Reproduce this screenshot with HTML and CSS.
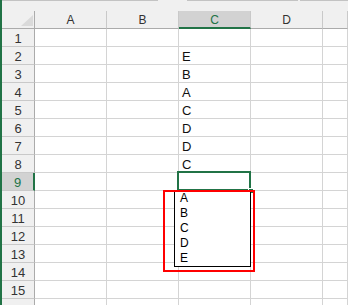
FILE: index.html
```html
<!DOCTYPE html>
<html>
<head>
<meta charset="utf-8">
<link rel="stylesheet" href="styles.css">
</head>
<body>
<div class="app">
  <div class="strip"></div>
  <div class="main">
    <div class="topbar">
      <span class="seg seg1"></span><span class="gap gap1"></span><span class="seg seg2"></span><span class="gap gap2"></span><span class="seg seg3"></span>
    </div>
    <div class="sheet">
      <div class="hd corner"><svg width="12" height="11" viewBox="0 0 12 11"><polygon points="12,0 12,11 0,11" fill="#dadada"/></svg></div>
      <div class="hd col">A</div>
      <div class="hd col">B</div>
      <div class="hd col sel-col">C</div>
      <div class="hd col">D</div>
      <div class="hd col last"></div>

      <div class="hd row">1</div><div class="c"></div><div class="c"></div><div class="c"></div><div class="c"></div><div class="c"></div>
      <div class="hd row">2</div><div class="c"></div><div class="c"></div><div class="c">E</div><div class="c"></div><div class="c"></div>
      <div class="hd row">3</div><div class="c"></div><div class="c"></div><div class="c">B</div><div class="c"></div><div class="c"></div>
      <div class="hd row">4</div><div class="c"></div><div class="c"></div><div class="c">A</div><div class="c"></div><div class="c"></div>
      <div class="hd row">5</div><div class="c"></div><div class="c"></div><div class="c">C</div><div class="c"></div><div class="c"></div>
      <div class="hd row">6</div><div class="c"></div><div class="c"></div><div class="c">D</div><div class="c"></div><div class="c"></div>
      <div class="hd row">7</div><div class="c"></div><div class="c"></div><div class="c">D</div><div class="c"></div><div class="c"></div>
      <div class="hd row">8</div><div class="c"></div><div class="c"></div><div class="c">C</div><div class="c"></div><div class="c"></div>
      <div class="hd row sel-row">9</div><div class="c"></div><div class="c"></div><div class="c"></div><div class="c"></div><div class="c"></div>
      <div class="hd row">10</div><div class="c"></div><div class="c"></div><div class="c"></div><div class="c"></div><div class="c"></div>
      <div class="hd row">11</div><div class="c"></div><div class="c"></div><div class="c"></div><div class="c"></div><div class="c"></div>
      <div class="hd row">12</div><div class="c"></div><div class="c"></div><div class="c"></div><div class="c"></div><div class="c"></div>
      <div class="hd row">13</div><div class="c"></div><div class="c"></div><div class="c"></div><div class="c"></div><div class="c"></div>
      <div class="hd row">14</div><div class="c"></div><div class="c"></div><div class="c"></div><div class="c"></div><div class="c"></div>
      <div class="hd row">15</div><div class="c"></div><div class="c"></div><div class="c"></div><div class="c"></div><div class="c"></div>
      <div class="hd row"></div><div class="c"></div><div class="c"></div><div class="c"></div><div class="c"></div><div class="c"></div>
    </div>
  </div>

  <div class="selection"><span class="handle"></span></div>
  <ul class="dropdown">
    <li>A</li>
    <li>B</li>
    <li>C</li>
    <li>D</li>
    <li>E</li>
  </ul>
  <div class="highlight"></div>
</div>
</body>
</html>
```

FILE: styles.css
```css
html, body {
  margin: 0;
  padding: 0;
  background: #ffffff;
}

.app {
  position: relative;
  width: 348px;
  height: 305px;
  overflow: hidden;
  display: flex;
  font-family: "Liberation Sans", Arial, sans-serif;
}

.strip {
  width: 2px;
  flex: none;
  background: #217346;
}

.main {
  flex: 1;
  display: flex;
  flex-direction: column;
  min-width: 0;
}

.topbar {
  height: 11px;
  flex: none;
  display: flex;
  align-items: flex-start;
  background: #f0f0f0;
}

.seg {
  height: 1px;
  background: #c3c3c3;
}

.seg1 { width: 156px; }
.gap1 { width: 29px; }
.seg2 { width: 111px; }
.gap2 { width: 2px; }
.seg3 { flex: 1; }

.sheet {
  display: grid;
  grid-template-columns: 33px 72px 72px 72px 72px 1fr;
  grid-auto-rows: 18px;
}

.sheet > div {
  box-sizing: border-box;
  border-right: 1px solid #d4d4d4;
  border-bottom: 1px solid #d4d4d4;
}

.hd {
  background: #f0f0f0;
  color: #333333;
  display: flex;
  align-items: center;
  justify-content: center;
}

.sheet > .col {
  font-size: 12px;
  border-right-color: #c9c9c9;
  border-bottom-color: #ababab;
  padding-top: 1px;
}

.sheet > .corner {
  border-right-color: #ababab;
  border-bottom-color: #ababab;
  justify-content: flex-end;
  align-items: flex-end;
  padding: 0 1px 2px 0;
}

.corner svg {
  display: block;
}

.sheet > .row {
  font-size: 13px;
  border-right-color: #ababab;
  border-bottom-color: #c9c9c9;
  padding-top: 1px;
}

.sheet > .sel-col {
  background: #d2d2d2;
  color: #217346;
  border-bottom: 2px solid #217346;
}

.sheet > .sel-row {
  background: #d2d2d2;
  color: #217346;
  border-right: 2px solid #217346;
}

.c {
  font-size: 13px;
  line-height: 17px;
  padding-left: 3px;
  padding-top: 1px;
  color: #111111;
}

.selection {
  position: absolute;
  left: 177px;
  top: 171px;
  width: 74px;
  height: 20px;
  box-sizing: border-box;
  border: 2px solid #217346;
}

.handle {
  position: absolute;
  right: -4px;
  bottom: -4px;
  width: 4px;
  height: 4px;
  background: #217346;
  border: 1px solid #ffffff;
  border-bottom: none;
  border-right: none;
}

.dropdown {
  position: absolute;
  left: 174px;
  top: 190px;
  width: 77px;
  height: 77px;
  box-sizing: border-box;
  margin: 0;
  padding: 0;
  list-style: none;
  background: #ffffff;
  border: 1px solid #000000;
}

.dropdown li {
  height: 15px;
  line-height: 15px;
  padding-left: 5px;
  font-size: 12px;
  color: #000000;
}

.highlight {
  position: absolute;
  left: 163px;
  top: 190px;
  width: 92px;
  height: 82px;
  box-sizing: border-box;
  border: 2px solid #ff0000;
}
```
